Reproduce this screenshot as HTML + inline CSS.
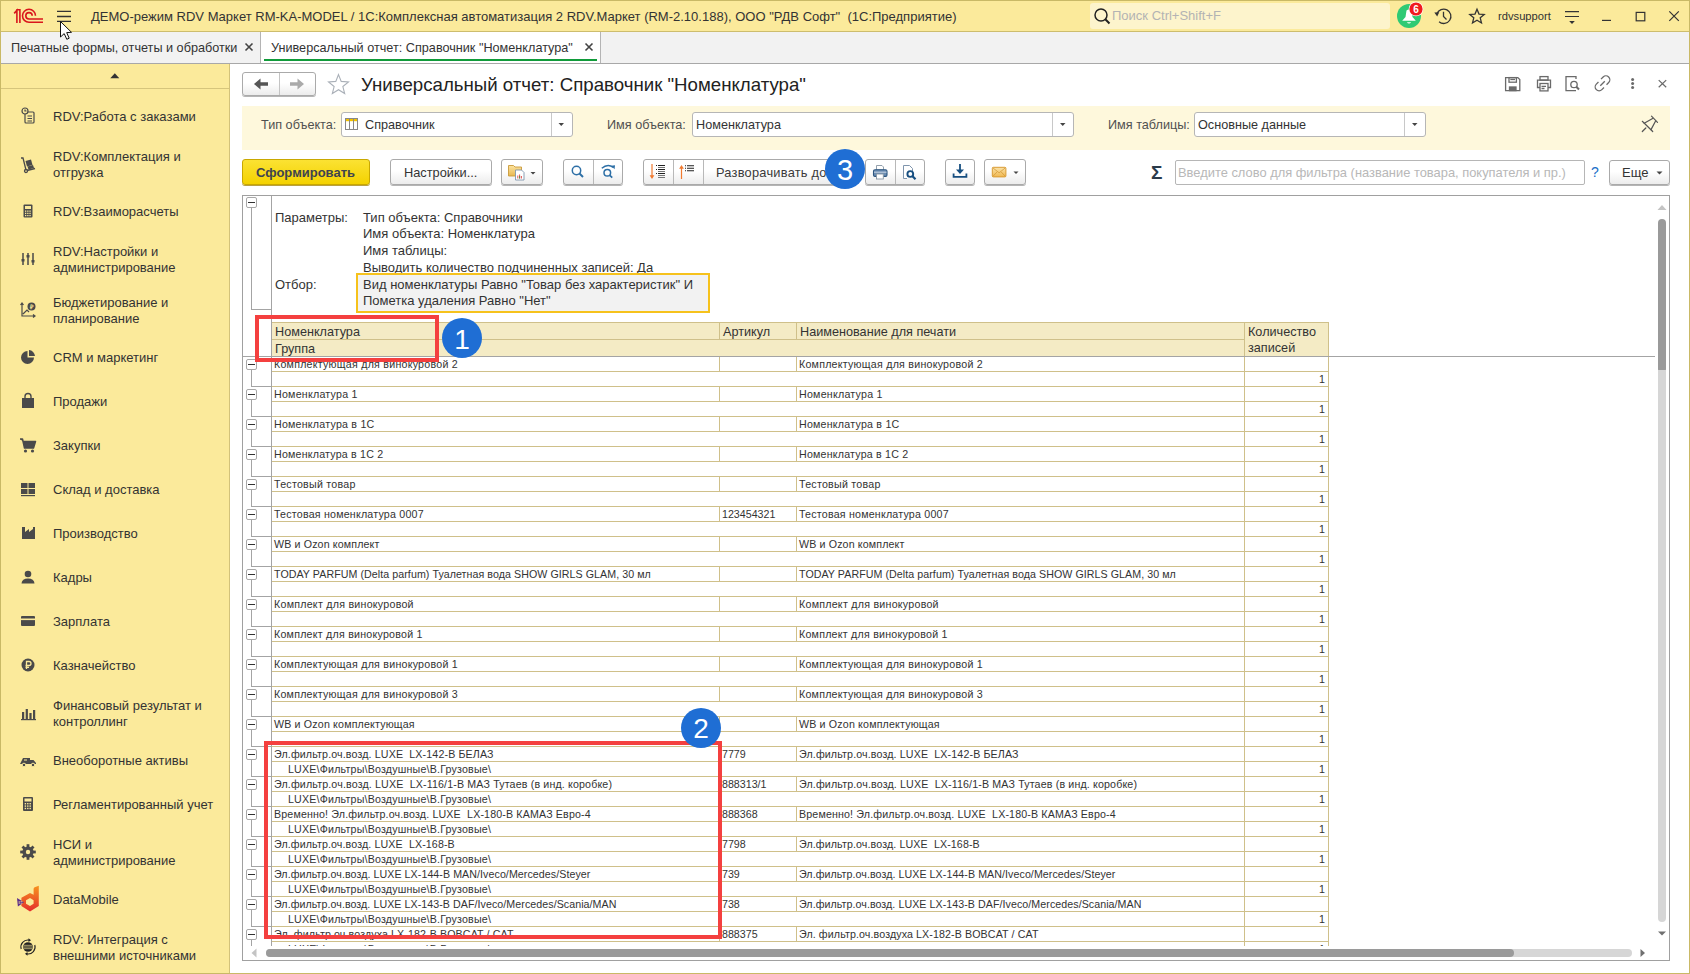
<!DOCTYPE html><html><head><meta charset="utf-8"><title>1C</title><style>
*{margin:0;padding:0;box-sizing:border-box}
html,body{width:1690px;height:974px;overflow:hidden;background:#fff}
body{position:relative;font-family:"Liberation Sans",sans-serif;color:#333}
.t{position:absolute;white-space:pre}
svg{overflow:visible}
</style></head><body>
<div style="position:absolute;left:0px;top:0px;width:1690px;height:31px;background:#fbea9b"></div>
<div style="position:absolute;left:0px;top:31px;width:1690px;height:1px;background:#cdbd6e"></div>
<div style="position:absolute;left:0px;top:32px;width:1690px;height:31px;background:#f2f2f2"></div>
<div style="position:absolute;left:261px;top:32px;width:340px;height:31px;background:#fff"></div>
<div style="position:absolute;left:260px;top:32px;width:1px;height:31px;background:#b4b4b4"></div>
<div style="position:absolute;left:600px;top:32px;width:1px;height:31px;background:#b4b4b4"></div>
<div style="position:absolute;left:0px;top:63px;width:1690px;height:1px;background:#a8a8a8"></div>
<div style="position:absolute;left:264px;top:59px;width:333px;height:2px;background:#109b3a"></div>
<div style="position:absolute;left:0px;top:64px;width:229px;height:910px;background:#fbea9b"></div>
<div style="position:absolute;left:229px;top:64px;width:1px;height:910px;background:#d3c27a"></div>
<div style="position:absolute;left:1px;top:88px;width:228px;height:1px;background:#d6c57c"></div>
<div style="position:absolute;left:0px;top:0px;width:1690px;height:1px;background:#c9b966"></div>
<div style="position:absolute;left:0px;top:0px;width:1px;height:974px;background:#c9b966"></div>
<div style="position:absolute;left:1689px;top:0px;width:1px;height:974px;background:#c9b966"></div>
<div style="position:absolute;left:0px;top:973px;width:1690px;height:1px;background:#c9b966"></div>
<svg style="position:absolute;left:0px;top:0px;" width="80" height="32" viewBox="0 0 80 32"><g fill="none" stroke="#d9161c" stroke-width="1.6"><path d="M14.2,13.4 L16.9,10.4 V23"/><path d="M16.3,9.8 H19.9 V23"/><path d="M35.5,15.8 A6.5,6.5 0 1 0 29,22.3 L43,22.3"/><path d="M32.2,15.8 A3.2,3.2 0 1 0 29,19 L43,19"/></g></svg>
<svg style="position:absolute;left:0px;top:0px;" width="80" height="32" viewBox="0 0 80 32"><g stroke="#333" stroke-width="1.3"><path d="M57,11.4H71M57,16.5H71M57,21.4H71"/></g></svg>
<div class="t" style="left:91px;top:9px;font-size:13px;line-height:16px;color:#333;font-weight:normal;">ДЕМО-режим RDV Маркет RM-KA-MODEL / 1С:Комплексная автоматизация 2 RDV.Маркет (RM-2.10.188), ООО &quot;РДВ Софт&quot;  (1С:Предприятие)</div>
<div style="position:absolute;left:1090px;top:3px;width:300px;height:26px;background:#fdf4cc;border-radius:3px"></div>
<svg style="position:absolute;left:1090px;top:3px;" width="30" height="26" viewBox="0 0 30 26"><g fill="none" stroke="#222" stroke-width="1.5"><circle cx="11" cy="12" r="6"/><path d="M15.3,16.3 L19.5,20.5" stroke-width="2"/></g></svg>
<div class="t" style="left:1112px;top:8px;font-size:13px;line-height:16px;color:#b3b3b3;font-weight:normal;">Поиск Ctrl+Shift+F</div>
<svg style="position:absolute;left:1390px;top:0px;" width="40" height="32" viewBox="0 0 40 32"><circle cx="19" cy="16" r="12" fill="#2fca74"/><path d="M12.2,20.7 L25.8,20.7 L22.5,17 L21.5,10.5 Q19,8.5 16.5,10.5 L15.5,17 Z" fill="#fff"/><path d="M16.8,22.3 Q19,24.8 21.2,22.3 Z" fill="#fff"/><circle cx="26" cy="9" r="7.3" fill="#fff"/><circle cx="26" cy="9" r="6.6" fill="#f01a1e"/><text x="26" y="12.6" font-family="Liberation Sans" font-weight="bold" font-size="10" fill="#fff" text-anchor="middle">6</text></svg>
<svg style="position:absolute;left:1430px;top:0px;" width="30" height="32" viewBox="0 0 30 32"><g fill="none" stroke="#333" stroke-width="1.3"><path d="M6.93,13.84 A7.2,7.2 0 1 1 9.07,21.8"/><path d="M13.5,11.8 L13.5,16.5 L16.5,19.5"/></g><path d="M4.3,12.6 L9.2,12.2 L7.2,16.4 Z" fill="#333"/></svg>
<svg style="position:absolute;left:1460px;top:0px;" width="34" height="32" viewBox="0 0 34 32"><polygon points="17.00,9.20 19.00,14.05 24.23,14.45 20.23,17.85 21.47,22.95 17.00,20.20 12.53,22.95 13.77,17.85 9.77,14.45 15.00,14.05" fill="none" stroke="#333" stroke-width="1.3" stroke-linejoin="miter"/></svg>
<div class="t" style="left:1498px;top:8px;font-size:11.2px;line-height:16px;color:#333;font-weight:normal;">rdvsupport</div>
<svg style="position:absolute;left:1560px;top:0px;" width="30" height="32" viewBox="0 0 30 32"><g stroke="#333" stroke-width="1.2"><path d="M5,11.6H19M5,16.5H19"/></g><path d="M9.2,21 L14.8,21 L12,24 Z" fill="#333"/></svg>
<svg style="position:absolute;left:1595px;top:0px;" width="95" height="32" viewBox="0 0 95 32"><g fill="none" stroke="#333" stroke-width="1.2"><path d="M7,20.4H16"/><rect x="41.2" y="12.4" width="8.6" height="8.4"/><path d="M74.3,11.3 L83.8,20.9 M83.8,11.3 L74.3,20.9"/></g></svg>
<div class="t" style="left:11px;top:40px;font-size:12.67px;line-height:16px;color:#333;font-weight:normal;">Печатные формы, отчеты и обработки</div>
<svg style="position:absolute;left:241px;top:38px;" width="16" height="18" viewBox="0 0 16 18"><g stroke="#444" stroke-width="1.6"><path d="M4.5,5.5 L11.5,12.5 M11.5,5.5 L4.5,12.5"/></g></svg>
<div class="t" style="left:271px;top:40px;font-size:12.67px;line-height:16px;color:#333;font-weight:normal;">Универсальный отчет: Справочник &quot;Номенклатура&quot;</div>
<svg style="position:absolute;left:581px;top:38px;" width="16" height="18" viewBox="0 0 16 18"><g stroke="#444" stroke-width="1.6"><path d="M4.5,5.5 L11.5,12.5 M11.5,5.5 L4.5,12.5"/></g></svg>
<svg style="position:absolute;left:105px;top:70px;" width="20" height="12" viewBox="0 0 20 12"><path d="M5.3,8.2 L14.3,8.2 L9.8,3.2 Z" fill="#333"/></svg>
<div class="t" style="left:53px;top:108.80px;font-size:13px;line-height:16px;color:#333;font-weight:normal;">RDV:Работа с заказами</div>
<svg style="position:absolute;left:18px;top:106px;" width="20" height="20" viewBox="0 0 20 20"><g fill="none" stroke="#4a4a4a" stroke-width="1.2"><rect x="7" y="6" width="9" height="11" rx="1"/><circle cx="7" cy="5" r="3" fill="#fbea9b"/><path d="M7,3.5V5H8.5M9.5,10H14M9.5,12.5H14M9.5,15H14"/></g></svg>
<div class="t" style="left:53px;top:148.80px;font-size:13px;line-height:16px;color:#333;font-weight:normal;">RDV:Комплектация и</div>
<div class="t" style="left:53px;top:164.80px;font-size:13px;line-height:16px;color:#333;font-weight:normal;">отгрузка</div>
<svg style="position:absolute;left:18px;top:154px;" width="20" height="20" viewBox="0 0 20 20"><g fill="none" stroke="#4a4a4a" stroke-width="1.3"><path d="M3,4 L5,4 L8,16"/><circle cx="8" cy="17" r="1.5"/><path d="M9,16.5 L17,14.5"/></g><path d="M7.5,7 L13,5.5 L14.5,11 L9,12.5 Z" fill="#4a4a4a"/><path d="M9.5,12.5 L15,11 L16,14 L10.5,15.5 Z" fill="#4a4a4a"/></svg>
<div class="t" style="left:53px;top:203.80px;font-size:13px;line-height:16px;color:#333;font-weight:normal;">RDV:Взаиморасчеты</div>
<svg style="position:absolute;left:18px;top:201px;" width="20" height="20" viewBox="0 0 20 20"><rect x="5.5" y="3.5" width="9" height="13" rx="1" fill="#4a4a4a"/><rect x="7" y="5" width="6" height="3" fill="#fbea9b"/><rect x="7.0" y="9.5" width="1.3" height="1.3" fill="#fbea9b"/><rect x="7.0" y="11.7" width="1.3" height="1.3" fill="#fbea9b"/><rect x="7.0" y="13.9" width="1.3" height="1.3" fill="#fbea9b"/><rect x="9.2" y="9.5" width="1.3" height="1.3" fill="#fbea9b"/><rect x="9.2" y="11.7" width="1.3" height="1.3" fill="#fbea9b"/><rect x="9.2" y="13.9" width="1.3" height="1.3" fill="#fbea9b"/><rect x="11.4" y="9.5" width="1.3" height="1.3" fill="#fbea9b"/><rect x="11.4" y="11.7" width="1.3" height="1.3" fill="#fbea9b"/><rect x="11.4" y="13.9" width="1.3" height="1.3" fill="#fbea9b"/></svg>
<div class="t" style="left:53px;top:243.80px;font-size:13px;line-height:16px;color:#333;font-weight:normal;">RDV:Настройки и</div>
<div class="t" style="left:53px;top:259.80px;font-size:13px;line-height:16px;color:#333;font-weight:normal;">администрирование</div>
<svg style="position:absolute;left:18px;top:249px;" width="20" height="20" viewBox="0 0 20 20"><g stroke="#4a4a4a" stroke-width="1.5"><path d="M5,4V16M10,4V16M15,4V16"/></g><g fill="#4a4a4a"><rect x="3.5" y="10" width="3" height="2.5"/><rect x="8.5" y="6" width="3" height="2.5"/><rect x="13.5" y="11" width="3" height="2.5"/></g></svg>
<div class="t" style="left:53px;top:294.80px;font-size:13px;line-height:16px;color:#333;font-weight:normal;">Бюджетирование и</div>
<div class="t" style="left:53px;top:310.80px;font-size:13px;line-height:16px;color:#333;font-weight:normal;">планирование</div>
<svg style="position:absolute;left:18px;top:300px;" width="20" height="20" viewBox="0 0 20 20"><g fill="none" stroke="#4a4a4a" stroke-width="1.2"><path d="M4,3V16H17M2.5,5L4,3L5.5,5M15,14.5L17,16L15,17.5M5,14L9,10L11,12"/></g><circle cx="13.5" cy="6.5" r="4" fill="#4a4a4a"/><text x="13.5" y="9" font-size="6" font-weight="bold" fill="#fbea9b" text-anchor="middle" font-family="Liberation Sans">₽</text></svg>
<div class="t" style="left:53px;top:349.80px;font-size:13px;line-height:16px;color:#333;font-weight:normal;">CRM и маркетинг</div>
<svg style="position:absolute;left:18px;top:347px;" width="20" height="20" viewBox="0 0 20 20"><path d="M9.5,4 A6.5,6.5 0 1 0 16,10.5 L9.5,10.5 Z" fill="#4a4a4a"/><path d="M11,3 A6.5,6.5 0 0 1 17,9 L11,9 Z" fill="#4a4a4a"/></svg>
<div class="t" style="left:53px;top:393.80px;font-size:13px;line-height:16px;color:#333;font-weight:normal;">Продажи</div>
<svg style="position:absolute;left:18px;top:391px;" width="20" height="20" viewBox="0 0 20 20"><path d="M4,7 L16,7 L16,17 L4,17 Z" fill="#4a4a4a"/><path d="M7,8V5.5A3,3 0 0 1 13,5.5V8" fill="none" stroke="#4a4a4a" stroke-width="1.4"/></svg>
<div class="t" style="left:53px;top:437.80px;font-size:13px;line-height:16px;color:#333;font-weight:normal;">Закупки</div>
<svg style="position:absolute;left:18px;top:435px;" width="20" height="20" viewBox="0 0 20 20"><path d="M2,4H4.5L6.5,13H15.5L17.5,6.5H5" fill="#4a4a4a" stroke="#4a4a4a" stroke-width="1.5" stroke-linejoin="round"/><circle cx="7.5" cy="16" r="1.6" fill="#4a4a4a"/><circle cx="14.5" cy="16" r="1.6" fill="#4a4a4a"/></svg>
<div class="t" style="left:53px;top:481.80px;font-size:13px;line-height:16px;color:#333;font-weight:normal;">Склад и доставка</div>
<svg style="position:absolute;left:18px;top:479px;" width="20" height="20" viewBox="0 0 20 20"><g fill="#4a4a4a"><rect x="3" y="4" width="6.5" height="5"/><rect x="10.5" y="4" width="6.5" height="5"/><rect x="3" y="10" width="6.5" height="5"/><rect x="10.5" y="10" width="6.5" height="5"/><rect x="3" y="16" width="14" height="1.2"/></g></svg>
<div class="t" style="left:53px;top:525.80px;font-size:13px;line-height:16px;color:#333;font-weight:normal;">Производство</div>
<svg style="position:absolute;left:18px;top:523px;" width="20" height="20" viewBox="0 0 20 20"><path d="M4,16V4H7V9L11,6V9L15,6V4H17V16Z" fill="#4a4a4a"/></svg>
<div class="t" style="left:53px;top:569.80px;font-size:13px;line-height:16px;color:#333;font-weight:normal;">Кадры</div>
<svg style="position:absolute;left:18px;top:567px;" width="20" height="20" viewBox="0 0 20 20"><circle cx="10" cy="7" r="3.3" fill="#4a4a4a"/><path d="M3.5,16.5 Q4,11.5 10,11.5 Q16,11.5 16.5,16.5Z" fill="#4a4a4a"/></svg>
<div class="t" style="left:53px;top:613.80px;font-size:13px;line-height:16px;color:#333;font-weight:normal;">Зарплата</div>
<svg style="position:absolute;left:18px;top:611px;" width="20" height="20" viewBox="0 0 20 20"><rect x="3" y="5" width="14" height="10" rx="1" fill="#4a4a4a"/><rect x="3" y="7.5" width="14" height="1.6" fill="#fbea9b"/></svg>
<div class="t" style="left:53px;top:657.80px;font-size:13px;line-height:16px;color:#333;font-weight:normal;">Казначейство</div>
<svg style="position:absolute;left:18px;top:655px;" width="20" height="20" viewBox="0 0 20 20"><circle cx="10" cy="10" r="6.5" fill="#4a4a4a"/><path d="M8.5,14V6.5H11A2,2 0 0 1 11,10.5H7.5M7.5,12.3H11" fill="none" stroke="#fbea9b" stroke-width="1.3"/></svg>
<div class="t" style="left:53px;top:697.80px;font-size:13px;line-height:16px;color:#333;font-weight:normal;">Финансовый результат и</div>
<div class="t" style="left:53px;top:713.80px;font-size:13px;line-height:16px;color:#333;font-weight:normal;">контроллинг</div>
<svg style="position:absolute;left:18px;top:703px;" width="20" height="20" viewBox="0 0 20 20"><g fill="#4a4a4a"><rect x="4" y="9" width="2.2" height="7"/><rect x="7.7" y="6" width="2.2" height="10"/><rect x="11.4" y="10" width="2.2" height="6"/><rect x="15" y="7" width="2.2" height="9"/><rect x="3" y="16" width="15" height="1.2"/></g></svg>
<div class="t" style="left:53px;top:752.80px;font-size:13px;line-height:16px;color:#333;font-weight:normal;">Внеоборотные активы</div>
<svg style="position:absolute;left:18px;top:750px;" width="20" height="20" viewBox="0 0 20 20"><path d="M2,14 L5,8 L12,8 L12,14 Z M12,10 L15.5,10 L18,13 L18,14 L12,14Z" fill="#4a4a4a"/><circle cx="6" cy="15" r="1.8" fill="#4a4a4a" stroke="#fbea9b"/><circle cx="15" cy="15" r="1.8" fill="#4a4a4a" stroke="#fbea9b"/><path d="M6,10 L9,10" stroke="#fbea9b"/></svg>
<div class="t" style="left:53px;top:796.80px;font-size:13px;line-height:16px;color:#333;font-weight:normal;">Регламентированный учет</div>
<svg style="position:absolute;left:18px;top:794px;" width="20" height="20" viewBox="0 0 20 20"><rect x="5" y="3" width="10" height="14" rx="1" fill="#4a4a4a"/><rect x="6.5" y="4.5" width="7" height="3" fill="#fbea9b"/><rect x="6.7" y="9.0" width="1.4" height="1.4" fill="#fbea9b"/><rect x="6.7" y="11.4" width="1.4" height="1.4" fill="#fbea9b"/><rect x="6.7" y="13.8" width="1.4" height="1.4" fill="#fbea9b"/><rect x="9.1" y="9.0" width="1.4" height="1.4" fill="#fbea9b"/><rect x="9.1" y="11.4" width="1.4" height="1.4" fill="#fbea9b"/><rect x="9.1" y="13.8" width="1.4" height="1.4" fill="#fbea9b"/><rect x="11.5" y="9.0" width="1.4" height="1.4" fill="#fbea9b"/><rect x="11.5" y="11.4" width="1.4" height="1.4" fill="#fbea9b"/><rect x="11.5" y="13.8" width="1.4" height="1.4" fill="#fbea9b"/></svg>
<div class="t" style="left:53px;top:836.80px;font-size:13px;line-height:16px;color:#333;font-weight:normal;">НСИ и</div>
<div class="t" style="left:53px;top:852.80px;font-size:13px;line-height:16px;color:#333;font-weight:normal;">администрирование</div>
<svg style="position:absolute;left:18px;top:842px;" width="20" height="20" viewBox="0 0 20 20"><rect x="8.6" y="2.2" width="2.8" height="3.5" fill="#4a4a4a" transform="rotate(0 10 10)"/><rect x="8.6" y="2.2" width="2.8" height="3.5" fill="#4a4a4a" transform="rotate(45 10 10)"/><rect x="8.6" y="2.2" width="2.8" height="3.5" fill="#4a4a4a" transform="rotate(90 10 10)"/><rect x="8.6" y="2.2" width="2.8" height="3.5" fill="#4a4a4a" transform="rotate(135 10 10)"/><rect x="8.6" y="2.2" width="2.8" height="3.5" fill="#4a4a4a" transform="rotate(180 10 10)"/><rect x="8.6" y="2.2" width="2.8" height="3.5" fill="#4a4a4a" transform="rotate(225 10 10)"/><rect x="8.6" y="2.2" width="2.8" height="3.5" fill="#4a4a4a" transform="rotate(270 10 10)"/><rect x="8.6" y="2.2" width="2.8" height="3.5" fill="#4a4a4a" transform="rotate(315 10 10)"/><circle cx="10" cy="10" r="5.6" fill="#4a4a4a"/><circle cx="10" cy="10" r="2.2" fill="#fbea9b"/></svg>
<div class="t" style="left:53px;top:891.80px;font-size:13px;line-height:16px;color:#333;font-weight:normal;">DataMobile</div>
<svg style="position:absolute;left:18px;top:889px;" width="20" height="20" viewBox="0 0 20 20"><defs><linearGradient id="dmg" x1="0" y1="0" x2="0" y2="1"><stop offset="0" stop-color="#f7931e"/><stop offset="1" stop-color="#e42d2d"/></linearGradient></defs><path d="M3.4,8.8 L12,4 L15.6,5.8 L15.6,0 Q15.6,-1.2 16.6,-1.8 L20.8,-3.2 L20.8,17 L12,22.4 L3.4,17 Z" fill="url(#dmg)"/><path d="M8,11.2 L12,9 L15.6,11.2 L15.6,14.8 L12,17 L8,14.8 Z" fill="#fbea9b"/><path d="M-1,9 L6,13.3 L-0.1,17.6 Z" fill="#5b2d8a"/><path d="M1.2,12 L1.2,15 M2.5,12.6 H4.5 M2.5,14.2 H4.5" stroke="#fbea9b" stroke-width="0.7"/></svg>
<div class="t" style="left:53px;top:931.80px;font-size:13px;line-height:16px;color:#333;font-weight:normal;">RDV: Интеграция с</div>
<div class="t" style="left:53px;top:947.80px;font-size:13px;line-height:16px;color:#333;font-weight:normal;">внешними источниками</div>
<svg style="position:absolute;left:18px;top:937px;" width="20" height="20" viewBox="0 0 20 20"><circle cx="10" cy="10" r="4.8" fill="#222"/><g stroke="#fbea9b" stroke-width="0.8" opacity="0.8"><path d="M6,8.3H14M5.5,10H14.5M6,11.7H14"/></g><g fill="none" stroke="#222" stroke-width="1.1"><path d="M3.2,12 A7,7 0 0 1 11,3.1"/><path d="M16.8,8 A7,7 0 0 1 9,16.9"/></g><path d="M10.5,1.3 L13,3.2 L10.5,4.9 Z M9.5,15.1 L7,16.8 L9.5,18.7 Z" fill="#222"/></svg>
<div style="position:absolute;left:242px;top:72px;width:74px;height:24px;border:1px solid #aaa;border-radius:3px;background:linear-gradient(#fff 0%,#fff 45%,#ececec 100%);box-shadow:0 1px 0 #b5b5b5"></div>
<div style="position:absolute;left:279px;top:73px;width:1px;height:22px;background:#c4c4c4"></div>
<svg style="position:absolute;left:242px;top:72px;" width="74" height="24" viewBox="0 0 74 24"><path d="M12,12 L18.5,6.5 L18.5,10.3 L26,10.3 L26,13.7 L18.5,13.7 L18.5,17.5 Z" fill="#555"/><path d="M62,12 L55.5,6.5 L55.5,10.3 L48,10.3 L48,13.7 L55.5,13.7 L55.5,17.5 Z" fill="#aaa"/></svg>
<svg style="position:absolute;left:322px;top:68px;" width="34" height="32" viewBox="0 0 34 32"><polygon points="16.50,6.60 19.20,13.38 26.49,13.86 20.87,18.52 22.67,25.59 16.50,21.70 10.33,25.59 12.13,18.52 6.51,13.86 13.80,13.38" fill="none" stroke="#aab0b8" stroke-width="1.1"/></svg>
<div class="t" style="left:361px;top:74.43px;font-size:18.67px;line-height:22px;color:#222;font-weight:normal;">Универсальный отчет: Справочник &quot;Номенклатура&quot;</div>
<svg style="position:absolute;left:1500px;top:70px;" width="180" height="28" viewBox="0 0 180 28"><g fill="none" stroke="#6a6a6a" stroke-width="1.3"><path d="M5.6,7.6 H17.8 L19.8,9.6 V20.6 H5.6 Z"/><rect x="9" y="7.6" width="7.4" height="4.6"/><path d="M10.3,9.5H15"/><rect x="9.5" y="17" width="6.5" height="3.6" fill="#6a6a6a"/><rect x="40" y="6.6" width="8" height="3.5"/><path d="M37.5,10.1 H50.5 V17.5 H37.5 Z"/><rect x="40" y="13.5" width="8" height="7.4" fill="#fff"/><path d="M41.5,16.3H46M41.5,18.5H44.5"/><path d="M76,20.6 H66 V6.6 H76 V9"/><circle cx="74" cy="14.5" r="3.2"/><path d="M76.3,16.8 L79,19.5" stroke-width="2"/><path d="M101,9.16 L103.14,7.04 A3.9,3.9 0 0 1 108.66,12.56 L106.54,14.68"/><path d="M98.46,12.02 L96.34,14.14 A3.9,3.9 0 0 0 101.86,19.66 L103.98,17.54"/><path d="M100.3,15.7 L104.8,11.2"/><path d="M158.7,10.1 L166.2,17.3 M166.2,10.1 L158.7,17.3" stroke-width="1.2"/></g><g fill="#6a6a6a"><circle cx="132.6" cy="9.6" r="1.5"/><circle cx="132.6" cy="13.5" r="1.5"/><circle cx="132.6" cy="17.5" r="1.5"/></g></svg>
<div style="position:absolute;left:242px;top:106px;width:1428px;height:44px;background:#fef8dc"></div>
<div class="t" style="left:261px;top:116.61px;font-size:12.67px;line-height:16px;color:#505050;font-weight:normal;">Тип объекта:</div>
<div style="position:absolute;left:341px;top:112px;width:232px;height:25px;border:1px solid #b6b6b6;border-radius:3px;background:#fff"></div>
<div style="position:absolute;left:551px;top:113px;width:1px;height:23px;background:#c8c8c8"></div>
<svg style="position:absolute;left:341px;top:112px;" width="232" height="25" viewBox="0 0 232 25"><path d="M217.5,11 L223,11 L220.25,14 Z" fill="#444"/><rect x="4.5" y="6.5" width="12" height="11" fill="none" stroke="#888" stroke-width="1"/><rect x="5" y="7" width="11" height="2.2" fill="#f2c200"/><path d="M8.5,7V17.5M12.5,7V17.5" stroke="#888" stroke-width="1"/></svg>
<div class="t" style="left:365px;top:116.61px;font-size:12.67px;line-height:16px;color:#333;font-weight:normal;">Справочник</div>
<div class="t" style="left:607px;top:116.61px;font-size:12.67px;line-height:16px;color:#505050;font-weight:normal;">Имя объекта:</div>
<div style="position:absolute;left:692px;top:112px;width:382px;height:25px;border:1px solid #b6b6b6;border-radius:3px;background:#fff"></div>
<div style="position:absolute;left:1052px;top:113px;width:1px;height:23px;background:#c8c8c8"></div>
<svg style="position:absolute;left:1052px;top:112px;" width="22" height="25" viewBox="0 0 22 25"><path d="M8,11 L13.5,11 L10.75,14 Z" fill="#444"/></svg>
<div class="t" style="left:696px;top:116.61px;font-size:12.67px;line-height:16px;color:#333;font-weight:normal;">Номенклатура</div>
<div class="t" style="left:1108px;top:116.61px;font-size:12.67px;line-height:16px;color:#505050;font-weight:normal;">Имя таблицы:</div>
<div style="position:absolute;left:1194px;top:112px;width:232px;height:25px;border:1px solid #b6b6b6;border-radius:3px;background:#fff"></div>
<div style="position:absolute;left:1404px;top:113px;width:1px;height:23px;background:#c8c8c8"></div>
<svg style="position:absolute;left:1404px;top:112px;" width="22" height="25" viewBox="0 0 22 25"><path d="M8,11 L13.5,11 L10.75,14 Z" fill="#444"/></svg>
<div class="t" style="left:1198px;top:116.61px;font-size:12.67px;line-height:16px;color:#333;font-weight:normal;">Основные данные</div>
<svg style="position:absolute;left:1638px;top:112px;" width="24" height="24" viewBox="0 0 24 24"><g fill="none" stroke="#555" stroke-width="1.2" stroke-linecap="round"><path d="M4.3,9.3 L14.7,19.5"/><path d="M6.2,11.3 L14.6,6.6"/><path d="M13.5,4.2 L19.5,10.4"/><path d="M17.6,9 L13,17.6"/><path d="M4.3,19.5 L7.8,16"/></g></svg>
<div style="position:absolute;left:242px;top:159px;width:128px;height:26px;border:1px solid #c9a800;border-radius:3px;background:linear-gradient(#fbe233,#f4d200);box-shadow:0 1px 0 #b8a040"></div>
<div class="t" style="left:256px;top:164.50px;font-size:13px;line-height:16px;color:#3e4350;font-weight:bold;">Сформировать</div>
<div style="position:absolute;left:390px;top:159px;width:102px;height:26px;border:1px solid #aaa;border-radius:3px;background:linear-gradient(#fff 0%,#fff 45%,#ececec 100%);box-shadow:0 1px 0 #b5b5b5"></div>
<div class="t" style="left:404px;top:164.56px;font-size:12.8px;line-height:16px;color:#333;font-weight:normal;">Настройки...</div>
<div style="position:absolute;left:501px;top:159px;width:42px;height:26px;border:1px solid #aaa;border-radius:3px;background:linear-gradient(#fff 0%,#fff 45%,#ececec 100%);box-shadow:0 1px 0 #b5b5b5"></div>
<svg style="position:absolute;left:501px;top:159px;" width="42" height="26" viewBox="0 0 42 26"><defs><linearGradient id="fg" x1="0" y1="0" x2="0" y2="1"><stop offset="0" stop-color="#fbe3a0"/><stop offset="1" stop-color="#e9b850"/></linearGradient></defs><path d="M7.5,6.5 h5 l1.5,1.5 H20.5 V17 H7.5 Z" fill="url(#fg)" stroke="#c99a3a" stroke-width="0.9"/><path d="M14.5,11 H20.5 L23,13.5 V21 H14.5 Z" fill="#fff" stroke="#7f95ad" stroke-width="0.9"/><path d="M16.8,19.5V16.5M18.6,19.5V15.5M20.4,19.5V17" stroke="#e04040" stroke-width="0.9"/><path d="M18.6,19.5V17" stroke="#3a9a40" stroke-width="0.9"/><path d="M29.5,13 L34.5,13 L32,15.5 Z" fill="#444"/></svg>
<div style="position:absolute;left:563px;top:159px;width:60px;height:26px;border:1px solid #aaa;border-radius:3px;background:linear-gradient(#fff 0%,#fff 45%,#ececec 100%);box-shadow:0 1px 0 #b5b5b5"></div>
<div style="position:absolute;left:593px;top:160px;width:1px;height:24px;background:#b8b8b8"></div>
<svg style="position:absolute;left:563px;top:159px;" width="60" height="26" viewBox="0 0 60 26"><g fill="none" stroke="#2d6fa6" stroke-width="1.5"><circle cx="13.5" cy="11.5" r="4.2"/><path d="M16.5,14.5 L20,18" stroke-width="2"/><circle cx="44.3" cy="13.8" r="3.3"/><path d="M46.6,16.1 L49.2,18.7" stroke-width="1.7"/><path d="M38.8,9.3 Q44.5,4.3 50.3,8.3"/></g><path d="M48.3,6.8 L52,6.3 L51.5,10.3 Z" fill="#2d6fa6"/></svg>
<div style="position:absolute;left:643px;top:159px;width:212px;height:26px;border:1px solid #aaa;border-radius:3px;background:linear-gradient(#fff 0%,#fff 45%,#ececec 100%);box-shadow:0 1px 0 #b5b5b5"></div>
<div style="position:absolute;left:673px;top:160px;width:1px;height:24px;background:#b8b8b8"></div>
<div style="position:absolute;left:703px;top:160px;width:1px;height:24px;background:#b8b8b8"></div>
<svg style="position:absolute;left:643px;top:159px;" width="60" height="26" viewBox="0 0 60 26"><g stroke="#f07a30" stroke-width="1.2"><path d="M9,5V18.5"/></g><path d="M6.6,16.3 L11.4,16.3 L9,20Z" fill="#f07a30"/><g stroke="#222" stroke-width="1"><path d="M13,6.5H14M15,6.5H22M13,10.5H14M15,10.5H22M13,14.5H14M15,14.5H22"/></g><g stroke="#777" stroke-width="1"><path d="M15,8.5H22M15,12.5H22M15,16.5H22M15,18.5H22"/></g><g stroke="#f07a30" stroke-width="1.2"><path d="M38.5,8V20"/></g><path d="M36.1,9.7 L40.9,9.7 L38.5,6Z" fill="#f07a30"/><g stroke="#222" stroke-width="1.1"><path d="M42,6.8H43M44,6.8H51M42,9.3H43M44,9.3H51M42,11.8H43M44,11.8H51"/></g></svg>
<div class="t" style="left:716px;top:164.56px;font-size:12.8px;line-height:16px;color:#3a3a3a;font-weight:normal;letter-spacing:0.25px">Разворачивать до</div>
<div style="position:absolute;left:865px;top:159px;width:60px;height:26px;border:1px solid #aaa;border-radius:3px;background:linear-gradient(#fff 0%,#fff 45%,#ececec 100%);box-shadow:0 1px 0 #b5b5b5"></div>
<div style="position:absolute;left:895px;top:160px;width:1px;height:24px;background:#b8b8b8"></div>
<svg style="position:absolute;left:865px;top:159px;" width="60" height="26" viewBox="0 0 60 26"><path d="M11.5,6.5 H17 L18.5,8 V11 H11.5 Z" fill="#fff" stroke="#8896a4" stroke-width="0.9"/><rect x="8.5" y="10.8" width="13.5" height="6.6" rx="1.5" fill="#6a8cb2" stroke="#2d557f" stroke-width="1.1"/><path d="M9,13.2 H21.5" stroke="#c8d6e4" stroke-width="1"/><rect x="11.5" y="15" width="6.8" height="5" fill="#fff" stroke="#8896a4" stroke-width="0.9"/><path d="M42,19.5 H38.5 V6.5 H44.5 L47.5,9.5 V12" fill="#fff" stroke="#7f95ad" stroke-width="1"/><circle cx="45.3" cy="15" r="2.9" fill="none" stroke="#164e80" stroke-width="1.9"/><path d="M47.3,17 L50.5,20.2" stroke="#164e80" stroke-width="2.2"/></svg>
<div style="position:absolute;left:945px;top:159px;width:30px;height:26px;border:1px solid #aaa;border-radius:3px;background:linear-gradient(#fff 0%,#fff 45%,#ececec 100%);box-shadow:0 1px 0 #b5b5b5"></div>
<svg style="position:absolute;left:945px;top:159px;" width="30" height="26" viewBox="0 0 30 26"><g stroke="#164e80" stroke-width="1.8" fill="none"><path d="M15,5V13"/><path d="M8.6,14.5V17.8H21.4V14.5"/></g><path d="M11,10.5 L19,10.5 L15,15Z" fill="#164e80"/></svg>
<div style="position:absolute;left:984px;top:159px;width:42px;height:26px;border:1px solid #aaa;border-radius:3px;background:linear-gradient(#fff 0%,#fff 45%,#ececec 100%);box-shadow:0 1px 0 #b5b5b5"></div>
<svg style="position:absolute;left:984px;top:159px;" width="42" height="26" viewBox="0 0 42 26"><defs><linearGradient id="mg" x1="0" y1="0" x2="0" y2="1"><stop offset="0" stop-color="#fbe3a8"/><stop offset="1" stop-color="#f0b850"/></linearGradient></defs><rect x="8.3" y="8.3" width="13.6" height="9.6" rx="1" fill="url(#mg)" stroke="#d99b35" stroke-width="1"/><path d="M8.8,8.8 L15.1,13.8 L21.4,8.8 M8.8,17.4 L13,13 M21.4,17.4 L17.2,13" fill="none" stroke="#d49a3a" stroke-width="0.8"/><path d="M29.5,12.6 L34.5,12.6 L32,15 Z" fill="#444"/></svg>
<svg style="position:absolute;left:824px;top:149px;" width="42" height="42" viewBox="0 0 42 42"><circle cx="21" cy="20" r="20" fill="#1f6ed4"/><text x="21" y="30.5" font-family="Liberation Sans" font-size="29" fill="#fff" text-anchor="middle">3</text></svg>
<div class="t" style="left:1151px;top:163.42px;font-size:19px;line-height:20px;color:#2a3a4a;font-weight:bold;">Σ</div>
<div style="position:absolute;left:1175px;top:160px;width:410px;height:25px;border:1px solid #b6b6b6;border-radius:2px;background:#fff"></div>
<div class="t" style="left:1178px;top:164.53px;font-size:12.9px;line-height:16px;color:#b8b8b8;font-weight:normal;">Введите слово для фильтра (название товара, покупателя и пр.)</div>
<div class="t" style="left:1591px;top:164.15px;font-size:14px;line-height:16px;color:#1a6fc8;font-weight:normal;">?</div>
<div style="position:absolute;left:1609px;top:160px;width:61px;height:25px;border:1px solid #aaa;border-radius:3px;background:linear-gradient(#fff 0%,#fff 45%,#ececec 100%);box-shadow:0 1px 0 #b5b5b5"></div>
<div class="t" style="left:1622px;top:164.50px;font-size:13px;line-height:16px;color:#333;font-weight:normal;">Еще</div>
<svg style="position:absolute;left:1609px;top:160px;" width="61" height="25" viewBox="0 0 61 25"><path d="M47.5,11.5 L53.5,11.5 L50.5,14.5 Z" fill="#444"/></svg>
<div style="position:absolute;left:242px;top:195px;width:1428px;height:766px;border:1px solid #a0a0a0;background:#fff"></div>
<div style="position:absolute;left:243px;top:196px;width:1412px;height:750px;overflow:hidden">
<div style="position:absolute;left:3px;top:1px;width:11px;height:11px;border:1px solid #a8a8a8;border-radius:2px;background:#fff"></div>
<div style="position:absolute;left:5px;top:6px;width:7px;height:1px;background:#333"></div>
<div style="position:absolute;left:8px;top:11px;width:1px;height:102px;background:#a4a4a4"></div>
<div style="position:absolute;left:8px;top:113px;width:20px;height:1px;background:#a4a4a4"></div>
<div class="t" style="left:32px;top:13.50px;font-size:13px;line-height:16px;color:#333;font-weight:normal;">Параметры:</div>
<div class="t" style="left:120px;top:13.50px;font-size:13px;line-height:16px;color:#333;font-weight:normal;">Тип объекта: Справочники</div>
<div class="t" style="left:120px;top:30.20px;font-size:13px;line-height:16px;color:#333;font-weight:normal;">Имя объекта: Номенклатура</div>
<div class="t" style="left:120px;top:46.80px;font-size:13px;line-height:16px;color:#333;font-weight:normal;">Имя таблицы:</div>
<div class="t" style="left:120px;top:63.50px;font-size:13px;line-height:16px;color:#333;font-weight:normal;">Выводить количество подчиненных записей: Да</div>
<div class="t" style="left:32px;top:81.20px;font-size:13px;line-height:16px;color:#333;font-weight:normal;">Отбор:</div>
<div style="position:absolute;left:113px;top:77px;width:354px;height:40px;border:2px solid #f6c21c;background:#f2f2f2"></div>
<div class="t" style="left:120px;top:81.20px;font-size:13px;line-height:16px;color:#333;font-weight:normal;">Вид номенклатуры Равно &quot;Товар без характеристик&quot; И</div>
<div class="t" style="left:120px;top:97.00px;font-size:13px;line-height:16px;color:#333;font-weight:normal;">Пометка удаления Равно &quot;Нет&quot;</div>
<div style="position:absolute;left:28px;top:126px;width:1058px;height:35px;background:#f4ebc5"></div>
<div style="position:absolute;left:28px;top:126px;width:1058px;height:1px;background:#cfc08a"></div>
<div style="position:absolute;left:28px;top:143px;width:974px;height:1px;background:#cfc08a"></div>
<div style="position:absolute;left:476px;top:126px;width:1px;height:17px;background:#cfc08a"></div>
<div style="position:absolute;left:553px;top:126px;width:1px;height:17px;background:#cfc08a"></div>
<div style="position:absolute;left:1001px;top:126px;width:1px;height:35px;background:#cfc08a"></div>
<div style="position:absolute;left:1085px;top:126px;width:1px;height:35px;background:#cfc08a"></div>
<div class="t" style="left:32px;top:127.91px;font-size:12.67px;line-height:16px;color:#333;font-weight:normal;">Номенклатура</div>
<div class="t" style="left:480px;top:127.91px;font-size:12.67px;line-height:16px;color:#333;font-weight:normal;">Артикул</div>
<div class="t" style="left:557px;top:127.91px;font-size:12.67px;line-height:16px;color:#333;font-weight:normal;">Наименование для печати</div>
<div class="t" style="left:1005px;top:127.91px;font-size:12.67px;line-height:16px;color:#333;font-weight:normal;">Количество</div>
<div class="t" style="left:32px;top:144.91px;font-size:12.67px;line-height:16px;color:#333;font-weight:normal;">Группа</div>
<div class="t" style="left:1005px;top:143.91px;font-size:12.67px;line-height:16px;color:#333;font-weight:normal;">записей</div>
<div style="position:absolute;left:0px;top:160px;width:1412px;height:1px;background:#a4a4a4"></div>
<div style="position:absolute;left:28px;top:175px;width:1058px;height:1px;background:#cfc08a"></div>
<div style="position:absolute;left:28px;top:190px;width:1058px;height:1px;background:#cfc08a"></div>
<div style="position:absolute;left:476px;top:161px;width:1px;height:14px;background:#cfc08a"></div>
<div style="position:absolute;left:553px;top:161px;width:1px;height:14px;background:#cfc08a"></div>
<div style="position:absolute;left:1001px;top:161px;width:1px;height:29px;background:#cfc08a"></div>
<div style="position:absolute;left:1085px;top:161px;width:1px;height:29px;background:#cfc08a"></div>
<div class="t" style="left:31px;top:161.10px;font-size:10.67px;line-height:14px;color:#333;font-weight:normal;letter-spacing:0.235px">Комплектующая для винокуровой 2</div>
<div class="t" style="left:556px;top:161.10px;font-size:10.67px;line-height:14px;color:#333;font-weight:normal;letter-spacing:0.235px">Комплектующая для винокуровой 2</div>
<div class="t" style="left:1076px;top:176.10px;font-size:10.67px;line-height:14px;color:#333;font-weight:normal;">1</div>
<div style="position:absolute;left:3px;top:163px;width:11px;height:11px;border:1px solid #a8a8a8;border-radius:2px;background:#fff"></div>
<div style="position:absolute;left:5px;top:168px;width:7px;height:1px;background:#333"></div>
<div style="position:absolute;left:8px;top:174px;width:1px;height:16px;background:#a4a4a4"></div>
<div style="position:absolute;left:8px;top:190px;width:20px;height:1px;background:#a4a4a4"></div>
<div style="position:absolute;left:28px;top:205px;width:1058px;height:1px;background:#cfc08a"></div>
<div style="position:absolute;left:28px;top:220px;width:1058px;height:1px;background:#cfc08a"></div>
<div style="position:absolute;left:476px;top:191px;width:1px;height:14px;background:#cfc08a"></div>
<div style="position:absolute;left:553px;top:191px;width:1px;height:14px;background:#cfc08a"></div>
<div style="position:absolute;left:1001px;top:191px;width:1px;height:29px;background:#cfc08a"></div>
<div style="position:absolute;left:1085px;top:191px;width:1px;height:29px;background:#cfc08a"></div>
<div class="t" style="left:31px;top:191.10px;font-size:10.67px;line-height:14px;color:#333;font-weight:normal;letter-spacing:0.231px">Номенклатура 1</div>
<div class="t" style="left:556px;top:191.10px;font-size:10.67px;line-height:14px;color:#333;font-weight:normal;letter-spacing:0.231px">Номенклатура 1</div>
<div class="t" style="left:1076px;top:206.10px;font-size:10.67px;line-height:14px;color:#333;font-weight:normal;">1</div>
<div style="position:absolute;left:3px;top:193px;width:11px;height:11px;border:1px solid #a8a8a8;border-radius:2px;background:#fff"></div>
<div style="position:absolute;left:5px;top:198px;width:7px;height:1px;background:#333"></div>
<div style="position:absolute;left:8px;top:204px;width:1px;height:16px;background:#a4a4a4"></div>
<div style="position:absolute;left:8px;top:220px;width:20px;height:1px;background:#a4a4a4"></div>
<div style="position:absolute;left:28px;top:235px;width:1058px;height:1px;background:#cfc08a"></div>
<div style="position:absolute;left:28px;top:250px;width:1058px;height:1px;background:#cfc08a"></div>
<div style="position:absolute;left:476px;top:221px;width:1px;height:14px;background:#cfc08a"></div>
<div style="position:absolute;left:553px;top:221px;width:1px;height:14px;background:#cfc08a"></div>
<div style="position:absolute;left:1001px;top:221px;width:1px;height:29px;background:#cfc08a"></div>
<div style="position:absolute;left:1085px;top:221px;width:1px;height:29px;background:#cfc08a"></div>
<div class="t" style="left:31px;top:221.10px;font-size:10.67px;line-height:14px;color:#333;font-weight:normal;letter-spacing:0.222px">Номенклатура в 1С</div>
<div class="t" style="left:556px;top:221.10px;font-size:10.67px;line-height:14px;color:#333;font-weight:normal;letter-spacing:0.222px">Номенклатура в 1С</div>
<div class="t" style="left:1076px;top:236.10px;font-size:10.67px;line-height:14px;color:#333;font-weight:normal;">1</div>
<div style="position:absolute;left:3px;top:223px;width:11px;height:11px;border:1px solid #a8a8a8;border-radius:2px;background:#fff"></div>
<div style="position:absolute;left:5px;top:228px;width:7px;height:1px;background:#333"></div>
<div style="position:absolute;left:8px;top:234px;width:1px;height:16px;background:#a4a4a4"></div>
<div style="position:absolute;left:8px;top:250px;width:20px;height:1px;background:#a4a4a4"></div>
<div style="position:absolute;left:28px;top:265px;width:1058px;height:1px;background:#cfc08a"></div>
<div style="position:absolute;left:28px;top:280px;width:1058px;height:1px;background:#cfc08a"></div>
<div style="position:absolute;left:476px;top:251px;width:1px;height:14px;background:#cfc08a"></div>
<div style="position:absolute;left:553px;top:251px;width:1px;height:14px;background:#cfc08a"></div>
<div style="position:absolute;left:1001px;top:251px;width:1px;height:29px;background:#cfc08a"></div>
<div style="position:absolute;left:1085px;top:251px;width:1px;height:29px;background:#cfc08a"></div>
<div class="t" style="left:31px;top:251.10px;font-size:10.67px;line-height:14px;color:#333;font-weight:normal;letter-spacing:0.199px">Номенклатура в 1С 2</div>
<div class="t" style="left:556px;top:251.10px;font-size:10.67px;line-height:14px;color:#333;font-weight:normal;letter-spacing:0.199px">Номенклатура в 1С 2</div>
<div class="t" style="left:1076px;top:266.10px;font-size:10.67px;line-height:14px;color:#333;font-weight:normal;">1</div>
<div style="position:absolute;left:3px;top:253px;width:11px;height:11px;border:1px solid #a8a8a8;border-radius:2px;background:#fff"></div>
<div style="position:absolute;left:5px;top:258px;width:7px;height:1px;background:#333"></div>
<div style="position:absolute;left:8px;top:264px;width:1px;height:16px;background:#a4a4a4"></div>
<div style="position:absolute;left:8px;top:280px;width:20px;height:1px;background:#a4a4a4"></div>
<div style="position:absolute;left:28px;top:295px;width:1058px;height:1px;background:#cfc08a"></div>
<div style="position:absolute;left:28px;top:310px;width:1058px;height:1px;background:#cfc08a"></div>
<div style="position:absolute;left:476px;top:281px;width:1px;height:14px;background:#cfc08a"></div>
<div style="position:absolute;left:553px;top:281px;width:1px;height:14px;background:#cfc08a"></div>
<div style="position:absolute;left:1001px;top:281px;width:1px;height:29px;background:#cfc08a"></div>
<div style="position:absolute;left:1085px;top:281px;width:1px;height:29px;background:#cfc08a"></div>
<div class="t" style="left:31px;top:281.10px;font-size:10.67px;line-height:14px;color:#333;font-weight:normal;letter-spacing:0.251px">Тестовый товар</div>
<div class="t" style="left:556px;top:281.10px;font-size:10.67px;line-height:14px;color:#333;font-weight:normal;letter-spacing:0.251px">Тестовый товар</div>
<div class="t" style="left:1076px;top:296.10px;font-size:10.67px;line-height:14px;color:#333;font-weight:normal;">1</div>
<div style="position:absolute;left:3px;top:283px;width:11px;height:11px;border:1px solid #a8a8a8;border-radius:2px;background:#fff"></div>
<div style="position:absolute;left:5px;top:288px;width:7px;height:1px;background:#333"></div>
<div style="position:absolute;left:8px;top:294px;width:1px;height:16px;background:#a4a4a4"></div>
<div style="position:absolute;left:8px;top:310px;width:20px;height:1px;background:#a4a4a4"></div>
<div style="position:absolute;left:28px;top:325px;width:1058px;height:1px;background:#cfc08a"></div>
<div style="position:absolute;left:28px;top:340px;width:1058px;height:1px;background:#cfc08a"></div>
<div style="position:absolute;left:476px;top:311px;width:1px;height:14px;background:#cfc08a"></div>
<div style="position:absolute;left:553px;top:311px;width:1px;height:14px;background:#cfc08a"></div>
<div style="position:absolute;left:1001px;top:311px;width:1px;height:29px;background:#cfc08a"></div>
<div style="position:absolute;left:1085px;top:311px;width:1px;height:29px;background:#cfc08a"></div>
<div class="t" style="left:31px;top:311.10px;font-size:10.67px;line-height:14px;color:#333;font-weight:normal;letter-spacing:0.208px">Тестовая номенклатура 0007</div>
<div class="t" style="left:479px;top:311.10px;font-size:10.67px;line-height:14px;color:#333;font-weight:normal;">123454321</div>
<div class="t" style="left:556px;top:311.10px;font-size:10.67px;line-height:14px;color:#333;font-weight:normal;letter-spacing:0.208px">Тестовая номенклатура 0007</div>
<div class="t" style="left:1076px;top:326.10px;font-size:10.67px;line-height:14px;color:#333;font-weight:normal;">1</div>
<div style="position:absolute;left:3px;top:313px;width:11px;height:11px;border:1px solid #a8a8a8;border-radius:2px;background:#fff"></div>
<div style="position:absolute;left:5px;top:318px;width:7px;height:1px;background:#333"></div>
<div style="position:absolute;left:8px;top:324px;width:1px;height:16px;background:#a4a4a4"></div>
<div style="position:absolute;left:8px;top:340px;width:20px;height:1px;background:#a4a4a4"></div>
<div style="position:absolute;left:28px;top:355px;width:1058px;height:1px;background:#cfc08a"></div>
<div style="position:absolute;left:28px;top:370px;width:1058px;height:1px;background:#cfc08a"></div>
<div style="position:absolute;left:476px;top:341px;width:1px;height:14px;background:#cfc08a"></div>
<div style="position:absolute;left:553px;top:341px;width:1px;height:14px;background:#cfc08a"></div>
<div style="position:absolute;left:1001px;top:341px;width:1px;height:29px;background:#cfc08a"></div>
<div style="position:absolute;left:1085px;top:341px;width:1px;height:29px;background:#cfc08a"></div>
<div class="t" style="left:31px;top:341.10px;font-size:10.67px;line-height:14px;color:#333;font-weight:normal;letter-spacing:0.135px">WB и Ozon комплект</div>
<div class="t" style="left:556px;top:341.10px;font-size:10.67px;line-height:14px;color:#333;font-weight:normal;letter-spacing:0.135px">WB и Ozon комплект</div>
<div class="t" style="left:1076px;top:356.10px;font-size:10.67px;line-height:14px;color:#333;font-weight:normal;">1</div>
<div style="position:absolute;left:3px;top:343px;width:11px;height:11px;border:1px solid #a8a8a8;border-radius:2px;background:#fff"></div>
<div style="position:absolute;left:5px;top:348px;width:7px;height:1px;background:#333"></div>
<div style="position:absolute;left:8px;top:354px;width:1px;height:16px;background:#a4a4a4"></div>
<div style="position:absolute;left:8px;top:370px;width:20px;height:1px;background:#a4a4a4"></div>
<div style="position:absolute;left:28px;top:385px;width:1058px;height:1px;background:#cfc08a"></div>
<div style="position:absolute;left:28px;top:400px;width:1058px;height:1px;background:#cfc08a"></div>
<div style="position:absolute;left:476px;top:371px;width:1px;height:14px;background:#cfc08a"></div>
<div style="position:absolute;left:553px;top:371px;width:1px;height:14px;background:#cfc08a"></div>
<div style="position:absolute;left:1001px;top:371px;width:1px;height:29px;background:#cfc08a"></div>
<div style="position:absolute;left:1085px;top:371px;width:1px;height:29px;background:#cfc08a"></div>
<div class="t" style="left:31px;top:371.10px;font-size:10.67px;line-height:14px;color:#333;font-weight:normal;letter-spacing:0.062px">TODAY PARFUM (Delta parfum) Туалетная вода SHOW GIRLS GLAM, 30 мл</div>
<div class="t" style="left:556px;top:371.10px;font-size:10.67px;line-height:14px;color:#333;font-weight:normal;letter-spacing:0.062px">TODAY PARFUM (Delta parfum) Туалетная вода SHOW GIRLS GLAM, 30 мл</div>
<div class="t" style="left:1076px;top:386.10px;font-size:10.67px;line-height:14px;color:#333;font-weight:normal;">1</div>
<div style="position:absolute;left:3px;top:373px;width:11px;height:11px;border:1px solid #a8a8a8;border-radius:2px;background:#fff"></div>
<div style="position:absolute;left:5px;top:378px;width:7px;height:1px;background:#333"></div>
<div style="position:absolute;left:8px;top:384px;width:1px;height:16px;background:#a4a4a4"></div>
<div style="position:absolute;left:8px;top:400px;width:20px;height:1px;background:#a4a4a4"></div>
<div style="position:absolute;left:28px;top:415px;width:1058px;height:1px;background:#cfc08a"></div>
<div style="position:absolute;left:28px;top:430px;width:1058px;height:1px;background:#cfc08a"></div>
<div style="position:absolute;left:476px;top:401px;width:1px;height:14px;background:#cfc08a"></div>
<div style="position:absolute;left:553px;top:401px;width:1px;height:14px;background:#cfc08a"></div>
<div style="position:absolute;left:1001px;top:401px;width:1px;height:29px;background:#cfc08a"></div>
<div style="position:absolute;left:1085px;top:401px;width:1px;height:29px;background:#cfc08a"></div>
<div class="t" style="left:31px;top:401.10px;font-size:10.67px;line-height:14px;color:#333;font-weight:normal;letter-spacing:0.248px">Комплект для винокуровой</div>
<div class="t" style="left:556px;top:401.10px;font-size:10.67px;line-height:14px;color:#333;font-weight:normal;letter-spacing:0.248px">Комплект для винокуровой</div>
<div class="t" style="left:1076px;top:416.10px;font-size:10.67px;line-height:14px;color:#333;font-weight:normal;">1</div>
<div style="position:absolute;left:3px;top:403px;width:11px;height:11px;border:1px solid #a8a8a8;border-radius:2px;background:#fff"></div>
<div style="position:absolute;left:5px;top:408px;width:7px;height:1px;background:#333"></div>
<div style="position:absolute;left:8px;top:414px;width:1px;height:16px;background:#a4a4a4"></div>
<div style="position:absolute;left:8px;top:430px;width:20px;height:1px;background:#a4a4a4"></div>
<div style="position:absolute;left:28px;top:445px;width:1058px;height:1px;background:#cfc08a"></div>
<div style="position:absolute;left:28px;top:460px;width:1058px;height:1px;background:#cfc08a"></div>
<div style="position:absolute;left:476px;top:431px;width:1px;height:14px;background:#cfc08a"></div>
<div style="position:absolute;left:553px;top:431px;width:1px;height:14px;background:#cfc08a"></div>
<div style="position:absolute;left:1001px;top:431px;width:1px;height:29px;background:#cfc08a"></div>
<div style="position:absolute;left:1085px;top:431px;width:1px;height:29px;background:#cfc08a"></div>
<div class="t" style="left:31px;top:431.10px;font-size:10.67px;line-height:14px;color:#333;font-weight:normal;letter-spacing:0.228px">Комплект для винокуровой 1</div>
<div class="t" style="left:556px;top:431.10px;font-size:10.67px;line-height:14px;color:#333;font-weight:normal;letter-spacing:0.228px">Комплект для винокуровой 1</div>
<div class="t" style="left:1076px;top:446.10px;font-size:10.67px;line-height:14px;color:#333;font-weight:normal;">1</div>
<div style="position:absolute;left:3px;top:433px;width:11px;height:11px;border:1px solid #a8a8a8;border-radius:2px;background:#fff"></div>
<div style="position:absolute;left:5px;top:438px;width:7px;height:1px;background:#333"></div>
<div style="position:absolute;left:8px;top:444px;width:1px;height:16px;background:#a4a4a4"></div>
<div style="position:absolute;left:8px;top:460px;width:20px;height:1px;background:#a4a4a4"></div>
<div style="position:absolute;left:28px;top:475px;width:1058px;height:1px;background:#cfc08a"></div>
<div style="position:absolute;left:28px;top:490px;width:1058px;height:1px;background:#cfc08a"></div>
<div style="position:absolute;left:476px;top:461px;width:1px;height:14px;background:#cfc08a"></div>
<div style="position:absolute;left:553px;top:461px;width:1px;height:14px;background:#cfc08a"></div>
<div style="position:absolute;left:1001px;top:461px;width:1px;height:29px;background:#cfc08a"></div>
<div style="position:absolute;left:1085px;top:461px;width:1px;height:29px;background:#cfc08a"></div>
<div class="t" style="left:31px;top:461.10px;font-size:10.67px;line-height:14px;color:#333;font-weight:normal;letter-spacing:0.235px">Комплектующая для винокуровой 1</div>
<div class="t" style="left:556px;top:461.10px;font-size:10.67px;line-height:14px;color:#333;font-weight:normal;letter-spacing:0.235px">Комплектующая для винокуровой 1</div>
<div class="t" style="left:1076px;top:476.10px;font-size:10.67px;line-height:14px;color:#333;font-weight:normal;">1</div>
<div style="position:absolute;left:3px;top:463px;width:11px;height:11px;border:1px solid #a8a8a8;border-radius:2px;background:#fff"></div>
<div style="position:absolute;left:5px;top:468px;width:7px;height:1px;background:#333"></div>
<div style="position:absolute;left:8px;top:474px;width:1px;height:16px;background:#a4a4a4"></div>
<div style="position:absolute;left:8px;top:490px;width:20px;height:1px;background:#a4a4a4"></div>
<div style="position:absolute;left:28px;top:505px;width:1058px;height:1px;background:#cfc08a"></div>
<div style="position:absolute;left:28px;top:520px;width:1058px;height:1px;background:#cfc08a"></div>
<div style="position:absolute;left:476px;top:491px;width:1px;height:14px;background:#cfc08a"></div>
<div style="position:absolute;left:553px;top:491px;width:1px;height:14px;background:#cfc08a"></div>
<div style="position:absolute;left:1001px;top:491px;width:1px;height:29px;background:#cfc08a"></div>
<div style="position:absolute;left:1085px;top:491px;width:1px;height:29px;background:#cfc08a"></div>
<div class="t" style="left:31px;top:491.10px;font-size:10.67px;line-height:14px;color:#333;font-weight:normal;letter-spacing:0.235px">Комплектующая для винокуровой 3</div>
<div class="t" style="left:556px;top:491.10px;font-size:10.67px;line-height:14px;color:#333;font-weight:normal;letter-spacing:0.235px">Комплектующая для винокуровой 3</div>
<div class="t" style="left:1076px;top:506.10px;font-size:10.67px;line-height:14px;color:#333;font-weight:normal;">1</div>
<div style="position:absolute;left:3px;top:493px;width:11px;height:11px;border:1px solid #a8a8a8;border-radius:2px;background:#fff"></div>
<div style="position:absolute;left:5px;top:498px;width:7px;height:1px;background:#333"></div>
<div style="position:absolute;left:8px;top:504px;width:1px;height:16px;background:#a4a4a4"></div>
<div style="position:absolute;left:8px;top:520px;width:20px;height:1px;background:#a4a4a4"></div>
<div style="position:absolute;left:28px;top:535px;width:1058px;height:1px;background:#cfc08a"></div>
<div style="position:absolute;left:28px;top:550px;width:1058px;height:1px;background:#cfc08a"></div>
<div style="position:absolute;left:476px;top:521px;width:1px;height:14px;background:#cfc08a"></div>
<div style="position:absolute;left:553px;top:521px;width:1px;height:14px;background:#cfc08a"></div>
<div style="position:absolute;left:1001px;top:521px;width:1px;height:29px;background:#cfc08a"></div>
<div style="position:absolute;left:1085px;top:521px;width:1px;height:29px;background:#cfc08a"></div>
<div class="t" style="left:31px;top:521.10px;font-size:10.67px;line-height:14px;color:#333;font-weight:normal;letter-spacing:0.164px">WB и Ozon комплектующая</div>
<div class="t" style="left:556px;top:521.10px;font-size:10.67px;line-height:14px;color:#333;font-weight:normal;letter-spacing:0.164px">WB и Ozon комплектующая</div>
<div class="t" style="left:1076px;top:536.10px;font-size:10.67px;line-height:14px;color:#333;font-weight:normal;">1</div>
<div style="position:absolute;left:3px;top:523px;width:11px;height:11px;border:1px solid #a8a8a8;border-radius:2px;background:#fff"></div>
<div style="position:absolute;left:5px;top:528px;width:7px;height:1px;background:#333"></div>
<div style="position:absolute;left:8px;top:534px;width:1px;height:16px;background:#a4a4a4"></div>
<div style="position:absolute;left:8px;top:550px;width:20px;height:1px;background:#a4a4a4"></div>
<div style="position:absolute;left:28px;top:565px;width:1058px;height:1px;background:#cfc08a"></div>
<div style="position:absolute;left:28px;top:580px;width:1058px;height:1px;background:#cfc08a"></div>
<div style="position:absolute;left:476px;top:551px;width:1px;height:14px;background:#cfc08a"></div>
<div style="position:absolute;left:553px;top:551px;width:1px;height:14px;background:#cfc08a"></div>
<div style="position:absolute;left:1001px;top:551px;width:1px;height:29px;background:#cfc08a"></div>
<div style="position:absolute;left:1085px;top:551px;width:1px;height:29px;background:#cfc08a"></div>
<div class="t" style="left:31px;top:551.10px;font-size:10.67px;line-height:14px;color:#333;font-weight:normal;letter-spacing:0.132px">Эл.фильтр.оч.возд. LUXE  LX-142-B БЕЛАЗ</div>
<div class="t" style="left:479px;top:551.10px;font-size:10.67px;line-height:14px;color:#333;font-weight:normal;">7779</div>
<div class="t" style="left:556px;top:551.10px;font-size:10.67px;line-height:14px;color:#333;font-weight:normal;letter-spacing:0.132px">Эл.фильтр.оч.возд. LUXE  LX-142-B БЕЛАЗ</div>
<div class="t" style="left:1076px;top:566.10px;font-size:10.67px;line-height:14px;color:#333;font-weight:normal;">1</div>
<div class="t" style="left:45px;top:566.10px;font-size:10.67px;line-height:14px;color:#333;font-weight:normal;letter-spacing:0.191px">LUXE\Фильтры\Воздушные\B.Грузовые\</div>
<div style="position:absolute;left:3px;top:553px;width:11px;height:11px;border:1px solid #a8a8a8;border-radius:2px;background:#fff"></div>
<div style="position:absolute;left:5px;top:558px;width:7px;height:1px;background:#333"></div>
<div style="position:absolute;left:8px;top:564px;width:1px;height:16px;background:#a4a4a4"></div>
<div style="position:absolute;left:8px;top:580px;width:20px;height:1px;background:#a4a4a4"></div>
<div style="position:absolute;left:28px;top:595px;width:1058px;height:1px;background:#cfc08a"></div>
<div style="position:absolute;left:28px;top:610px;width:1058px;height:1px;background:#cfc08a"></div>
<div style="position:absolute;left:476px;top:581px;width:1px;height:14px;background:#cfc08a"></div>
<div style="position:absolute;left:553px;top:581px;width:1px;height:14px;background:#cfc08a"></div>
<div style="position:absolute;left:1001px;top:581px;width:1px;height:29px;background:#cfc08a"></div>
<div style="position:absolute;left:1085px;top:581px;width:1px;height:29px;background:#cfc08a"></div>
<div class="t" style="left:31px;top:581.10px;font-size:10.67px;line-height:14px;color:#333;font-weight:normal;letter-spacing:0.146px">Эл.фильтр.оч.возд. LUXE  LX-116/1-B МАЗ Тутаев (в инд. коробке)</div>
<div class="t" style="left:479px;top:581.10px;font-size:10.67px;line-height:14px;color:#333;font-weight:normal;">888313/1</div>
<div class="t" style="left:556px;top:581.10px;font-size:10.67px;line-height:14px;color:#333;font-weight:normal;letter-spacing:0.146px">Эл.фильтр.оч.возд. LUXE  LX-116/1-B МАЗ Тутаев (в инд. коробке)</div>
<div class="t" style="left:1076px;top:596.10px;font-size:10.67px;line-height:14px;color:#333;font-weight:normal;">1</div>
<div class="t" style="left:45px;top:596.10px;font-size:10.67px;line-height:14px;color:#333;font-weight:normal;letter-spacing:0.191px">LUXE\Фильтры\Воздушные\B.Грузовые\</div>
<div style="position:absolute;left:3px;top:583px;width:11px;height:11px;border:1px solid #a8a8a8;border-radius:2px;background:#fff"></div>
<div style="position:absolute;left:5px;top:588px;width:7px;height:1px;background:#333"></div>
<div style="position:absolute;left:8px;top:594px;width:1px;height:16px;background:#a4a4a4"></div>
<div style="position:absolute;left:8px;top:610px;width:20px;height:1px;background:#a4a4a4"></div>
<div style="position:absolute;left:28px;top:625px;width:1058px;height:1px;background:#cfc08a"></div>
<div style="position:absolute;left:28px;top:640px;width:1058px;height:1px;background:#cfc08a"></div>
<div style="position:absolute;left:476px;top:611px;width:1px;height:14px;background:#cfc08a"></div>
<div style="position:absolute;left:553px;top:611px;width:1px;height:14px;background:#cfc08a"></div>
<div style="position:absolute;left:1001px;top:611px;width:1px;height:29px;background:#cfc08a"></div>
<div style="position:absolute;left:1085px;top:611px;width:1px;height:29px;background:#cfc08a"></div>
<div class="t" style="left:31px;top:611.10px;font-size:10.67px;line-height:14px;color:#333;font-weight:normal;letter-spacing:0.149px">Временно! Эл.фильтр.оч.возд. LUXE  LX-180-B КАМАЗ Евро-4</div>
<div class="t" style="left:479px;top:611.10px;font-size:10.67px;line-height:14px;color:#333;font-weight:normal;">888368</div>
<div class="t" style="left:556px;top:611.10px;font-size:10.67px;line-height:14px;color:#333;font-weight:normal;letter-spacing:0.149px">Временно! Эл.фильтр.оч.возд. LUXE  LX-180-B КАМАЗ Евро-4</div>
<div class="t" style="left:1076px;top:626.10px;font-size:10.67px;line-height:14px;color:#333;font-weight:normal;">1</div>
<div class="t" style="left:45px;top:626.10px;font-size:10.67px;line-height:14px;color:#333;font-weight:normal;letter-spacing:0.191px">LUXE\Фильтры\Воздушные\B.Грузовые\</div>
<div style="position:absolute;left:3px;top:613px;width:11px;height:11px;border:1px solid #a8a8a8;border-radius:2px;background:#fff"></div>
<div style="position:absolute;left:5px;top:618px;width:7px;height:1px;background:#333"></div>
<div style="position:absolute;left:8px;top:624px;width:1px;height:16px;background:#a4a4a4"></div>
<div style="position:absolute;left:8px;top:640px;width:20px;height:1px;background:#a4a4a4"></div>
<div style="position:absolute;left:28px;top:655px;width:1058px;height:1px;background:#cfc08a"></div>
<div style="position:absolute;left:28px;top:670px;width:1058px;height:1px;background:#cfc08a"></div>
<div style="position:absolute;left:476px;top:641px;width:1px;height:14px;background:#cfc08a"></div>
<div style="position:absolute;left:553px;top:641px;width:1px;height:14px;background:#cfc08a"></div>
<div style="position:absolute;left:1001px;top:641px;width:1px;height:29px;background:#cfc08a"></div>
<div style="position:absolute;left:1085px;top:641px;width:1px;height:29px;background:#cfc08a"></div>
<div class="t" style="left:31px;top:641.10px;font-size:10.67px;line-height:14px;color:#333;font-weight:normal;letter-spacing:0.115px">Эл.фильтр.оч.возд. LUXE  LX-168-B</div>
<div class="t" style="left:479px;top:641.10px;font-size:10.67px;line-height:14px;color:#333;font-weight:normal;">7798</div>
<div class="t" style="left:556px;top:641.10px;font-size:10.67px;line-height:14px;color:#333;font-weight:normal;letter-spacing:0.115px">Эл.фильтр.оч.возд. LUXE  LX-168-B</div>
<div class="t" style="left:1076px;top:656.10px;font-size:10.67px;line-height:14px;color:#333;font-weight:normal;">1</div>
<div class="t" style="left:45px;top:656.10px;font-size:10.67px;line-height:14px;color:#333;font-weight:normal;letter-spacing:0.191px">LUXE\Фильтры\Воздушные\B.Грузовые\</div>
<div style="position:absolute;left:3px;top:643px;width:11px;height:11px;border:1px solid #a8a8a8;border-radius:2px;background:#fff"></div>
<div style="position:absolute;left:5px;top:648px;width:7px;height:1px;background:#333"></div>
<div style="position:absolute;left:8px;top:654px;width:1px;height:16px;background:#a4a4a4"></div>
<div style="position:absolute;left:8px;top:670px;width:20px;height:1px;background:#a4a4a4"></div>
<div style="position:absolute;left:28px;top:685px;width:1058px;height:1px;background:#cfc08a"></div>
<div style="position:absolute;left:28px;top:700px;width:1058px;height:1px;background:#cfc08a"></div>
<div style="position:absolute;left:476px;top:671px;width:1px;height:14px;background:#cfc08a"></div>
<div style="position:absolute;left:553px;top:671px;width:1px;height:14px;background:#cfc08a"></div>
<div style="position:absolute;left:1001px;top:671px;width:1px;height:29px;background:#cfc08a"></div>
<div style="position:absolute;left:1085px;top:671px;width:1px;height:29px;background:#cfc08a"></div>
<div class="t" style="left:31px;top:671.10px;font-size:10.67px;line-height:14px;color:#333;font-weight:normal;letter-spacing:0.065px">Эл.фильтр.оч.возд. LUXE LX-144-B MAN/Iveco/Mercedes/Steyer</div>
<div class="t" style="left:479px;top:671.10px;font-size:10.67px;line-height:14px;color:#333;font-weight:normal;">739</div>
<div class="t" style="left:556px;top:671.10px;font-size:10.67px;line-height:14px;color:#333;font-weight:normal;letter-spacing:0.065px">Эл.фильтр.оч.возд. LUXE LX-144-B MAN/Iveco/Mercedes/Steyer</div>
<div class="t" style="left:1076px;top:686.10px;font-size:10.67px;line-height:14px;color:#333;font-weight:normal;">1</div>
<div class="t" style="left:45px;top:686.10px;font-size:10.67px;line-height:14px;color:#333;font-weight:normal;letter-spacing:0.191px">LUXE\Фильтры\Воздушные\B.Грузовые\</div>
<div style="position:absolute;left:3px;top:673px;width:11px;height:11px;border:1px solid #a8a8a8;border-radius:2px;background:#fff"></div>
<div style="position:absolute;left:5px;top:678px;width:7px;height:1px;background:#333"></div>
<div style="position:absolute;left:8px;top:684px;width:1px;height:16px;background:#a4a4a4"></div>
<div style="position:absolute;left:8px;top:700px;width:20px;height:1px;background:#a4a4a4"></div>
<div style="position:absolute;left:28px;top:715px;width:1058px;height:1px;background:#cfc08a"></div>
<div style="position:absolute;left:28px;top:730px;width:1058px;height:1px;background:#cfc08a"></div>
<div style="position:absolute;left:476px;top:701px;width:1px;height:14px;background:#cfc08a"></div>
<div style="position:absolute;left:553px;top:701px;width:1px;height:14px;background:#cfc08a"></div>
<div style="position:absolute;left:1001px;top:701px;width:1px;height:29px;background:#cfc08a"></div>
<div style="position:absolute;left:1085px;top:701px;width:1px;height:29px;background:#cfc08a"></div>
<div class="t" style="left:31px;top:701.10px;font-size:10.67px;line-height:14px;color:#333;font-weight:normal;letter-spacing:0.061px">Эл.фильтр.оч.возд. LUXE LX-143-B DAF/Iveco/Mercedes/Scania/MAN</div>
<div class="t" style="left:479px;top:701.10px;font-size:10.67px;line-height:14px;color:#333;font-weight:normal;">738</div>
<div class="t" style="left:556px;top:701.10px;font-size:10.67px;line-height:14px;color:#333;font-weight:normal;letter-spacing:0.061px">Эл.фильтр.оч.возд. LUXE LX-143-B DAF/Iveco/Mercedes/Scania/MAN</div>
<div class="t" style="left:1076px;top:716.10px;font-size:10.67px;line-height:14px;color:#333;font-weight:normal;">1</div>
<div class="t" style="left:45px;top:716.10px;font-size:10.67px;line-height:14px;color:#333;font-weight:normal;letter-spacing:0.191px">LUXE\Фильтры\Воздушные\B.Грузовые\</div>
<div style="position:absolute;left:3px;top:703px;width:11px;height:11px;border:1px solid #a8a8a8;border-radius:2px;background:#fff"></div>
<div style="position:absolute;left:5px;top:708px;width:7px;height:1px;background:#333"></div>
<div style="position:absolute;left:8px;top:714px;width:1px;height:16px;background:#a4a4a4"></div>
<div style="position:absolute;left:8px;top:730px;width:20px;height:1px;background:#a4a4a4"></div>
<div style="position:absolute;left:28px;top:745px;width:1058px;height:1px;background:#cfc08a"></div>
<div style="position:absolute;left:28px;top:760px;width:1058px;height:1px;background:#cfc08a"></div>
<div style="position:absolute;left:476px;top:731px;width:1px;height:14px;background:#cfc08a"></div>
<div style="position:absolute;left:553px;top:731px;width:1px;height:14px;background:#cfc08a"></div>
<div style="position:absolute;left:1001px;top:731px;width:1px;height:29px;background:#cfc08a"></div>
<div style="position:absolute;left:1085px;top:731px;width:1px;height:29px;background:#cfc08a"></div>
<div class="t" style="left:31px;top:731.10px;font-size:10.67px;line-height:14px;color:#333;font-weight:normal;letter-spacing:0.107px">Эл. фильтр.оч.воздуха LX-182-B BOBCAT / CAT</div>
<div class="t" style="left:479px;top:731.10px;font-size:10.67px;line-height:14px;color:#333;font-weight:normal;">888375</div>
<div class="t" style="left:556px;top:731.10px;font-size:10.67px;line-height:14px;color:#333;font-weight:normal;letter-spacing:0.107px">Эл. фильтр.оч.воздуха LX-182-B BOBCAT / CAT</div>
<div class="t" style="left:1076px;top:746.10px;font-size:10.67px;line-height:14px;color:#333;font-weight:normal;">1</div>
<div class="t" style="left:45px;top:746.10px;font-size:10.67px;line-height:14px;color:#333;font-weight:normal;letter-spacing:0.191px">LUXE\Фильтры\Воздушные\B.Грузовые\</div>
<div style="position:absolute;left:3px;top:733px;width:11px;height:11px;border:1px solid #a8a8a8;border-radius:2px;background:#fff"></div>
<div style="position:absolute;left:5px;top:738px;width:7px;height:1px;background:#333"></div>
<div style="position:absolute;left:8px;top:744px;width:1px;height:16px;background:#a4a4a4"></div>
<div style="position:absolute;left:8px;top:760px;width:20px;height:1px;background:#a4a4a4"></div>
<div style="position:absolute;left:28px;top:0px;width:1px;height:750px;background:#a4a4a4"></div>
</div>
<div style="position:absolute;left:1658px;top:219px;width:8px;height:154px;background:#9a9a9a;border-radius:4px"></div>
<div style="position:absolute;left:1658px;top:370px;width:8px;height:552px;background:#d6d6d6;border-radius:0 0 4px 4px"></div>
<svg style="position:absolute;left:1655px;top:200px;" width="14" height="14" viewBox="0 0 14 14"><path d="M2.5,10 L11.5,10 L7,5 Z" fill="#c4c4c4"/></svg>
<svg style="position:absolute;left:1655px;top:927px;" width="14" height="14" viewBox="0 0 14 14"><path d="M3,4.5 L11,4.5 L7,8.5 Z" fill="#707070"/></svg>
<div style="position:absolute;left:266px;top:949px;width:1366px;height:8px;background:#d6d6d6;border-radius:4px"></div>
<div style="position:absolute;left:266px;top:949px;width:1248px;height:8px;background:#9a9a9a;border-radius:4px"></div>
<svg style="position:absolute;left:246px;top:946px;" width="14" height="14" viewBox="0 0 14 14"><path d="M10.5,2.5 L10.5,11.5 L5.5,7 Z" fill="#c4c4c4"/></svg>
<svg style="position:absolute;left:1636px;top:946px;" width="14" height="14" viewBox="0 0 14 14"><path d="M4.5,3 L4.5,11 L9,7 Z" fill="#707070"/></svg>
<div style="position:absolute;left:255px;top:315px;width:184px;height:47px;border:4px solid #f4403f"></div>
<div style="position:absolute;left:264px;top:741px;width:458px;height:198px;border:4px solid #f4403f"></div>
<svg style="position:absolute;left:441px;top:317px;" width="42" height="42" viewBox="0 0 42 42"><circle cx="21" cy="21" r="20" fill="#1f6ed4"/><text x="21" y="31.5" font-family="Liberation Sans" font-size="28" fill="#fff" text-anchor="middle">1</text></svg>
<svg style="position:absolute;left:680px;top:707px;" width="42" height="42" viewBox="0 0 42 42"><circle cx="21" cy="21" r="20" fill="#1f6ed4"/><text x="21" y="31" font-family="Liberation Sans" font-size="28" fill="#fff" text-anchor="middle">2</text></svg>
<svg style="position:absolute;left:55px;top:17px;" width="20" height="24" viewBox="0 0 20 24"><path d="M5.5,4.5 L5.5,20 L9.2,16.6 L11.8,22.3 L14.2,21.2 L11.7,15.6 L16.5,15.3 Z" fill="#fff" stroke="#111" stroke-width="1" stroke-linejoin="round"/></svg>
</body></html>
